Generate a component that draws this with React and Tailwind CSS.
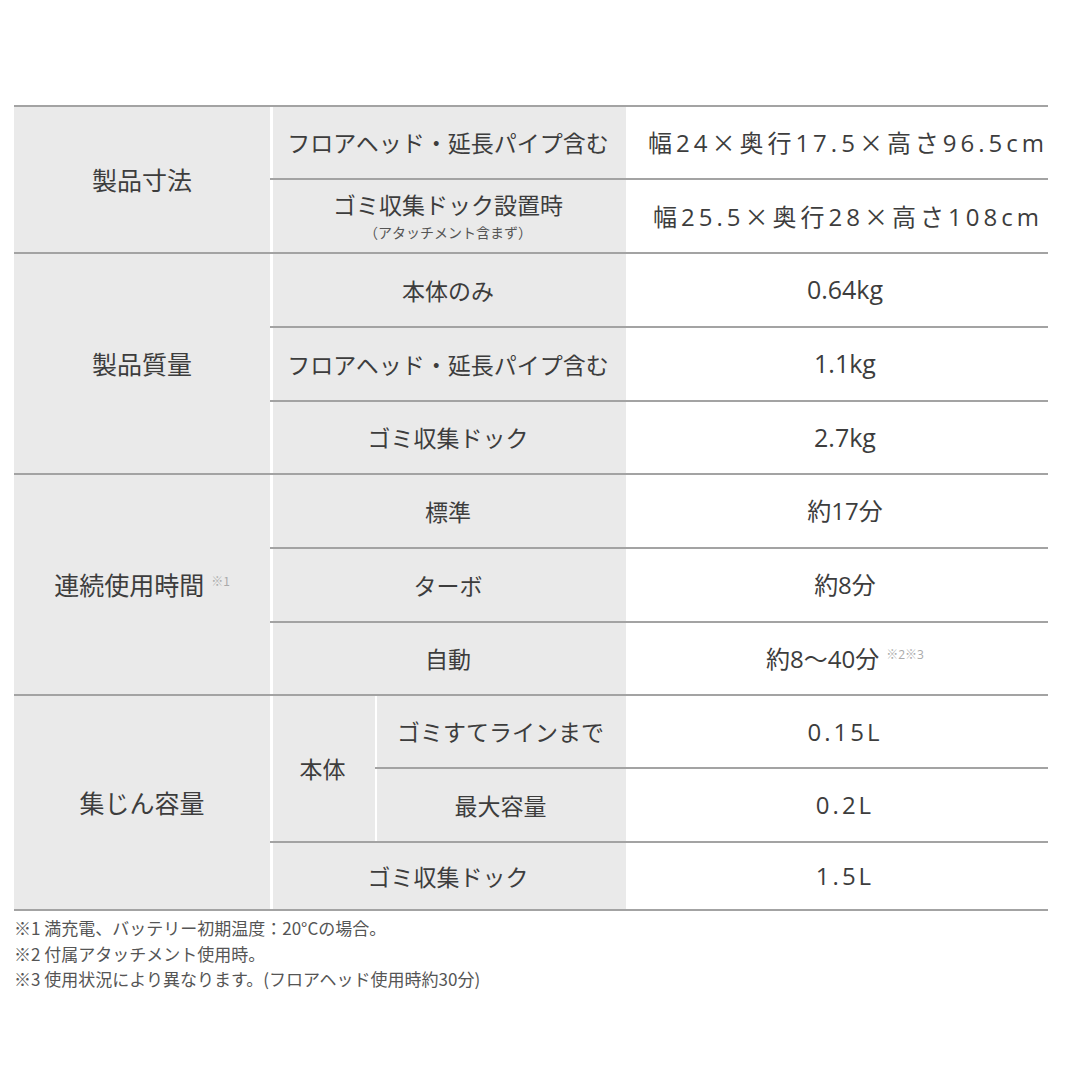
import React from "react";

const line = "border-b-2 border-[#a3a3a3]";
const grayCell = `bg-[#eaeaea] ${line} flex items-center justify-center text-center`;
const sep = "shadow-[inset_3px_0_0_#ffffff]";
const labelText = "text-[23px] text-[#3d3d3d] font-['Noto_Sans_CJK_JP',sans-serif]";
const groupText = "text-[25px] text-[#3d3d3d] font-['Noto_Sans_CJK_JP',sans-serif]";
const valueBase = `bg-white ${line} flex items-center justify-center text-center whitespace-nowrap text-[#3d3d3d] font-['Open_Sans','Noto_Sans_CJK_JP',sans-serif]`;
const valueCell = `${valueBase} pl-[16px] text-[24px]`;
const valueWide = `${valueBase} pl-[22px] text-[24px] tracking-[4px]`;
const valueL = `${valueBase} pl-[16px] text-[24px] tracking-[3px]`;
const valueKg = `${valueBase} pl-[16px] text-[25px]`;

function Sup({ children }) {
  return (
    <span className="relative top-[-9px] ml-[7px] text-[12px] tracking-normal text-[#aaaaaa]">{children}</span>
  );
}

function X() {
  return <span className="font-['Noto_Sans_CJK_JP',sans-serif]">×</span>;
}

export default function App() {
  return (
    <div className="w-[1080px] h-[1080px] bg-white pt-[105px] px-[14px] font-['Noto_Sans_CJK_JP',sans-serif]">
      <div className="w-[1034px] grid grid-cols-[256px_105px_251px_422px] grid-rows-[73px_74px_74px_74px_73px_74px_74px_73px_73px_74px_68px] border-t-2 border-[#a3a3a3]">
        {/* 製品寸法 */}
        <div className={`${grayCell} ${groupText} row-span-2`}>製品寸法</div>
        <div className={`${grayCell} ${labelText} ${sep} col-span-2`}>フロアヘッド・延長パイプ含む</div>
        <div className={valueWide}>
          <span>幅24<X />奥行17.5<X />高さ96.5cm</span>
        </div>
        <div className={`${grayCell} ${sep} col-span-2 flex-col`}>
          <span className={`${labelText} leading-[28px]`}>ゴミ収集ドック設置時</span>
          <span className="text-[14px] leading-[20px] mt-[4px] text-[#555555]">（アタッチメント含まず）</span>
        </div>
        <div className={valueWide}>
          <span>幅25.5<X />奥行28<X />高さ108cm</span>
        </div>

        {/* 製品質量 */}
        <div className={`${grayCell} ${groupText} row-span-3`}>製品質量</div>
        <div className={`${grayCell} ${labelText} ${sep} col-span-2`}>本体のみ</div>
        <div className={valueKg}>0.64kg</div>
        <div className={`${grayCell} ${labelText} ${sep} col-span-2`}>フロアヘッド・延長パイプ含む</div>
        <div className={valueKg}>1.1kg</div>
        <div className={`${grayCell} ${labelText} ${sep} col-span-2`}>ゴミ収集ドック</div>
        <div className={valueKg}>2.7kg</div>

        {/* 連続使用時間 */}
        <div className={`${grayCell} ${groupText} row-span-3`}>
          <span>連続使用時間<Sup>※1</Sup></span>
        </div>
        <div className={`${grayCell} ${labelText} ${sep} col-span-2`}>標準</div>
        <div className={valueCell}>約17分</div>
        <div className={`${grayCell} ${labelText} ${sep} col-span-2`}>ターボ</div>
        <div className={valueCell}>約8分</div>
        <div className={`${grayCell} ${labelText} ${sep} col-span-2`}>自動</div>
        <div className={valueCell}>
          <span>約8〜40分<Sup>※2※3</Sup></span>
        </div>

        {/* 集じん容量 */}
        <div className={`${grayCell} ${groupText} row-span-3`}>集じん容量</div>
        <div className={`${grayCell} ${labelText} ${sep} row-span-2`}>本体</div>
        <div className={`${grayCell} ${labelText} shadow-[inset_2px_0_0_#ffffff]`}>ゴミすてラインまで</div>
        <div className={valueL}>0.15L</div>
        <div className={`${grayCell} ${labelText} shadow-[inset_2px_0_0_#ffffff]`}>最大容量</div>
        <div className={valueL}>0.2L</div>
        <div className={`${grayCell} ${labelText} ${sep} col-span-2`}>ゴミ収集ドック</div>
        <div className={valueL}>1.5L</div>
      </div>

      <div className="mt-[4px] text-[17px] leading-[25.5px] text-[#555555] font-['Noto_Sans_CJK_JP',sans-serif]">
        <p>※1 満充電、バッテリー初期温度：20°Cの場合。</p>
        <p>※2 付属アタッチメント使用時。</p>
        <p>※3 使用状況により異なります。(フロアヘッド使用時約30分)</p>
      </div>
    </div>
  );
}
